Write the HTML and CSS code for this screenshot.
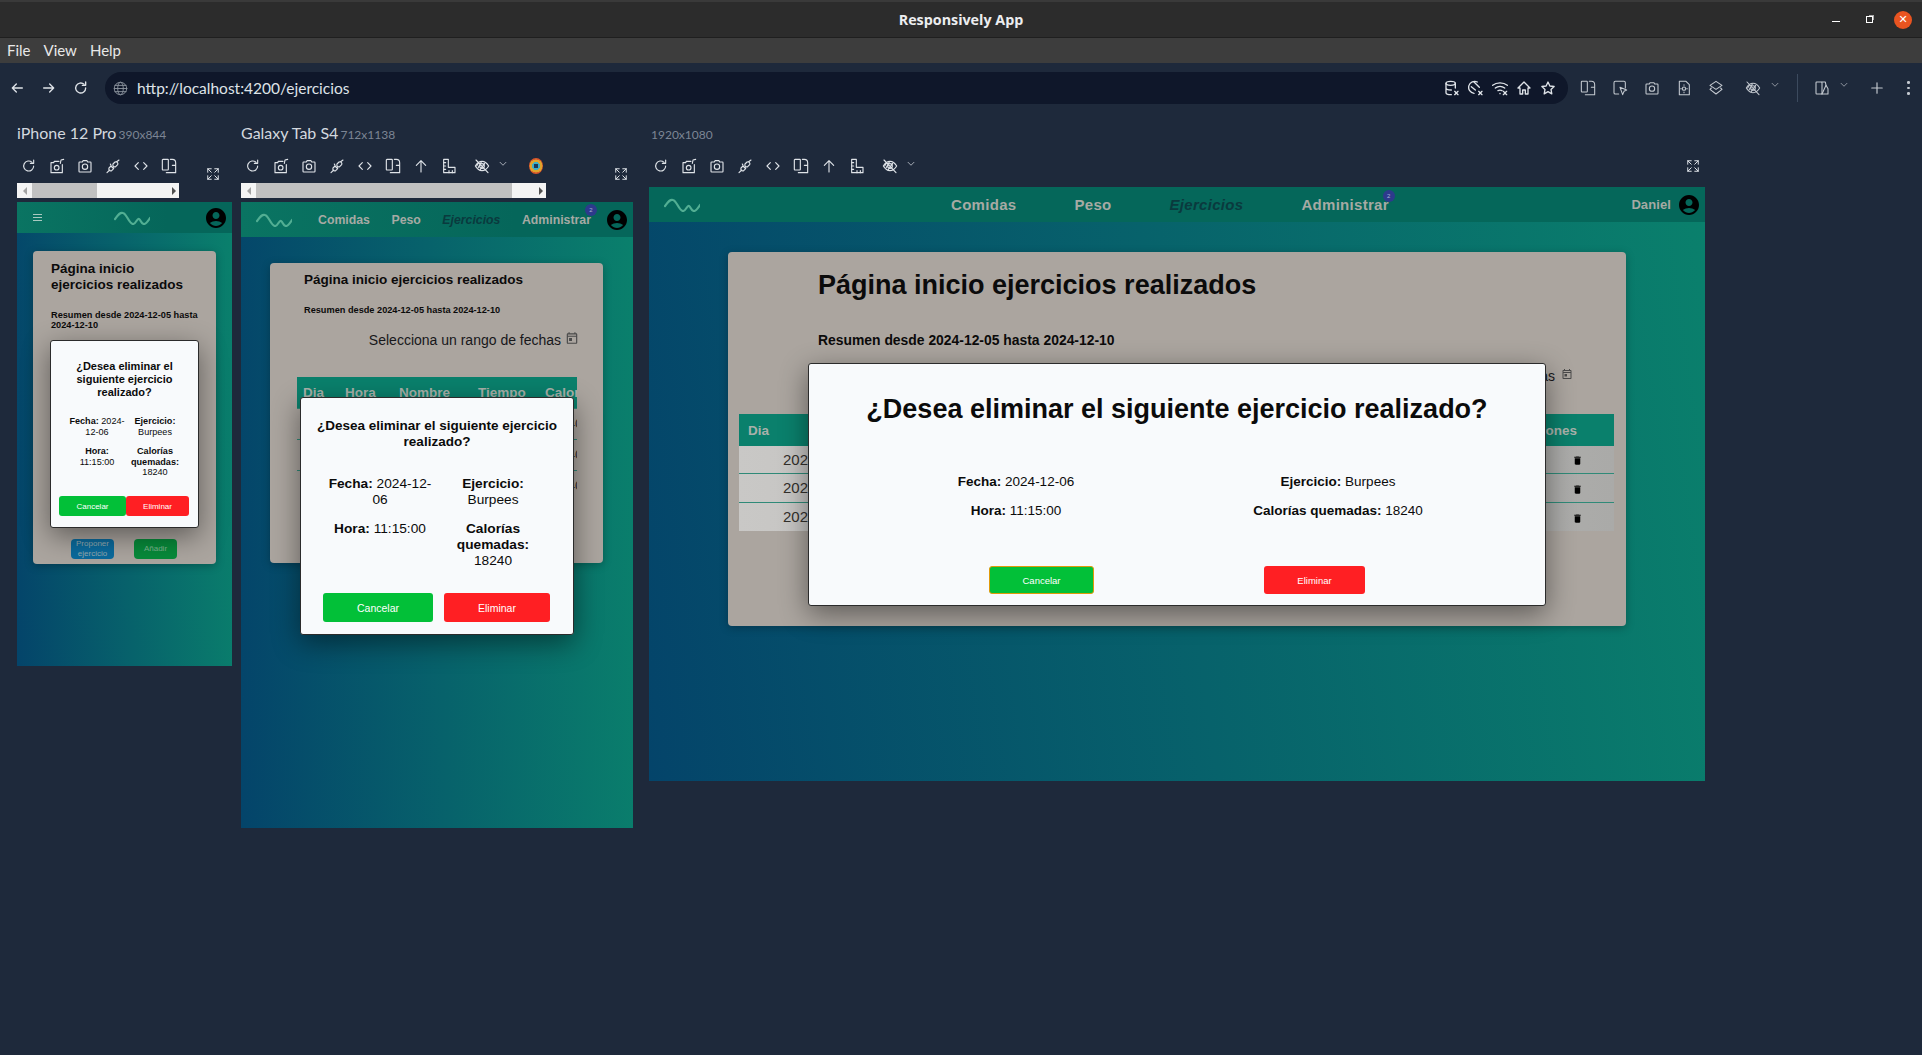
FILE: index.html
```html
<!DOCTYPE html>
<html lang="es">
<head>
  <meta charset="UTF-8" />
  <title>Responsively App</title>
  <link rel="stylesheet" href="styles.css">
</head>
<body>
  <svg class="sprite" xmlns="http://www.w3.org/2000/svg">
    <symbol id="i-refresh" viewBox="0 0 24 24"><path d="M19 12a7.5 7.5 0 1 1-2.4-5.5"/><path d="M19 3v5h-5"/></symbol>
    <symbol id="i-back" viewBox="0 0 24 24"><path d="M20 12H5M11 6l-6 6 6 6"/></symbol>
    <symbol id="i-forward" viewBox="0 0 24 24"><path d="M4 12h15M13 6l6 6-6 6"/></symbol>
    <symbol id="i-shot" viewBox="0 0 24 24"><path d="M15 5H8L7 7H3v15h17V10"/><circle cx="11.5" cy="14.5" r="3.5"/><path d="M17 8l1-5 4-1"/></symbol>
    <symbol id="i-camera" viewBox="0 0 24 24"><path d="M4 6h4l1-2h6l1 2h4a1 1 0 0 1 1 1v13a1 1 0 0 1-1 1H4a1 1 0 0 1-1-1V7a1 1 0 0 1 1-1z"/><circle cx="12" cy="13" r="4"/></symbol>
    <symbol id="i-plug" viewBox="0 0 24 24"><path d="M3 22l4-4M21 3l-4 3M9 12l-3 3a3 3 0 0 0 4 4l3-3zM15 6l-3 3a3 3 0 0 0 4 4l3-3a3 3 0 0 0-4-4z"/><path d="M8 9l1 2M11 14l2 1"/></symbol>
    <symbol id="i-code" viewBox="0 0 24 24"><path d="M8 7l-5 5 5 5M16 7l5 5-5 5"/></symbol>
    <symbol id="i-rotate" viewBox="0 0 24 24"><rect x="2" y="2" width="9" height="16" rx="1"/><path d="M14 2h3a5 5 0 0 1 5 5v15H8M22 11h-5"/></symbol>
    <symbol id="i-up" viewBox="0 0 24 24"><path d="M12 21V4M5 11l7-7 7 7"/></symbol>
    <symbol id="i-ruler" viewBox="0 0 24 24"><path d="M4 2h7v12h10v8H4z"/><path d="M4 7h3M4 12h3M4 17h3M12 22v-3M17 22v-3"/></symbol>
    <symbol id="i-eye" viewBox="0 0 24 24"><path d="M2 12c3-5 6-7 10-7s7 2 10 7c-3 5-6 7-10 7s-7-2-10-7z"/><circle cx="12" cy="12" r="3.5"/><path d="M3 3l18 19M7 7l-3 5M11 6l-5 9M16 8l-7 10"/></symbol>
    <symbol id="i-chevron" viewBox="0 0 24 24"><path d="M5 8l7 7 7-7"/></symbol>
    <symbol id="i-expand" viewBox="0 0 24 24"><path d="M3 9V3h6M3 3l6 6M15 3h6v6M21 3l-6 6M3 15v6h6M3 21l6-6M21 15v6h-6M21 21l-6-6"/></symbol>
    <symbol id="i-globe" viewBox="0 0 24 24"><circle cx="12" cy="12" r="10"/><ellipse cx="12" cy="12" rx="4.5" ry="10"/><path d="M2 12h20M3 7h18M3 17h18"/></symbol>
    <symbol id="i-db" viewBox="0 0 24 24"><ellipse cx="10" cy="5" rx="7" ry="3"/><path d="M3 5v14c0 2 3 3 8 3M17 5v7M3 12c0 2 4 3 8 3"/><path d="M16 17l5 5M21 17l-5 5"/></symbol>
    <symbol id="i-clockx" viewBox="0 0 24 24"><path d="M14 3a9 9 0 1 0-5 17"/><path d="M9 3l8 8M5 10l6 5M16 17l5 5M21 17l-5 5"/></symbol>
    <symbol id="i-wifi" viewBox="0 0 24 24"><path d="M1 8c6-5 16-5 22 0M5 12c4-3 10-3 14 0M9 16c2-1 4-1 6 0M12 20v.5"/><path d="M17 17l5 5M22 17l-5 5"/></symbol>
    <symbol id="i-home" viewBox="0 0 24 24"><path d="M12 3L3 12h3v9h4v-6h4v6h4v-9h3z"/></symbol>
    <symbol id="i-star" viewBox="0 0 24 24"><path d="M12 3l2.8 6 6.4.8-4.7 4.4 1.2 6.5L12 17.5l-5.7 3.2 1.2-6.5L2.800 9.800 9.200 9z"/></symbol>
    <symbol id="i-cursor" viewBox="0 0 24 24"><path d="M10 21H5a2 2 0 0 1-2-2V4a2 2 0 0 1 2-2h13a2 2 0 0 1 2 2v8"/><path d="M12 11l10 4-4 2-2 5z"/></symbol>
    <symbol id="i-doc" viewBox="0 0 24 24"><path d="M5 2h10l5 5v15H5z"/><circle cx="12" cy="13" r="2.500"/><path d="M12 7v1M12 18v1M7 13h1M16 13h1"/></symbol>
    <symbol id="i-layers" viewBox="0 0 24 24"><path d="M12 2l9 6-9 6-9-6z"/><path d="M5 12l-2 2 9 7 9-7-2-2"/></symbol>
    <symbol id="i-theme" viewBox="0 0 24 24"><rect x="3" y="3" width="9" height="18" rx="1"/><path d="M12 3h5l1 5-6 13"/><path d="M18 8l3 5v8h-9"/></symbol>
    <symbol id="i-plus" viewBox="0 0 24 24"><path d="M12 3v18M3 12h18"/></symbol>
    <symbol id="i-account" viewBox="0 0 24 24"><path class="solid" d="M12 2C6.480 2 2 6.480 2 12s4.480 10 10 10 10-4.480 10-10S17.520 2 12 2zm0 4c1.930 0 3.500 1.570 3.500 3.500S13.930 13 12 13s-3.500-1.570-3.500-3.500S10.070 6 12 6zm0 14c-2.030 0-4.430-.820-6.140-2.880C7.550 15.800 9.680 15 12 15s4.450.800 6.140 2.120C16.430 19.180 14.030 20 12 20z"/></symbol>
    <symbol id="i-calendar" viewBox="0 0 24 24"><path class="solid" d="M19 4h-1V2h-2v2H8V2H6v2H5c-1.110 0-1.990.900-1.990 2L3 20a2 2 0 0 0 2 2h14c1.100 0 2-.900 2-2V6c0-1.100-.900-2-2-2zm0 16H5V10h14v10zm0-12H5V6h14v2zM7 12h5v5H7z"/></symbol>
    <symbol id="i-trash" viewBox="0 0 24 24"><path class="solid" d="M6 19c0 1.100.900 2 2 2h8c1.100 0 2-.900 2-2V7H6v12zM19 4h-3.500l-1-1h-5l-1 1H5v2h14V4z"/></symbol>
    <symbol id="i-logo" viewBox="0 0 36 14"><path d="M1 8C4 4 6 1 9 2c4 1 6 11 10 11 3 0 4-6 6-5 2 1 2 5 5 5 2 0 4-3 6-6"/></symbol>
  </svg>

  <header class="titlebar">
    <span></span>
    <span class="app-name">Responsively App</span>
    <div class="win-controls">
      <span class="win-min"></span>
      <span class="win-max"></span>
      <span class="win-close">✕</span>
    </div>
  </header>

  <nav class="menubar">
    <span>File</span><span>View</span><span>Help</span>
  </nav>

  <div class="toolbar">
    <div class="tb-nav">
      <svg class="ic"><use href="#i-back"/></svg>
      <svg class="ic"><use href="#i-forward"/></svg>
      <svg class="ic"><use href="#i-refresh"/></svg>
    </div>
    <div class="addressbar">
      <svg class="ic ic-globe"><use href="#i-globe"/></svg>
      <span class="url">http://localhost:4200/ejercicios</span>
      <div class="addr-icons">
        <svg class="ic"><use href="#i-db"/></svg>
        <svg class="ic"><use href="#i-clockx"/></svg>
        <svg class="ic"><use href="#i-wifi"/></svg>
        <svg class="ic"><use href="#i-home"/></svg>
        <svg class="ic"><use href="#i-star"/></svg>
      </div>
    </div>
    <div class="tb-right">
      <svg class="ic"><use href="#i-rotate"/></svg>
      <svg class="ic"><use href="#i-cursor"/></svg>
      <svg class="ic"><use href="#i-camera"/></svg>
      <svg class="ic"><use href="#i-doc"/></svg>
      <svg class="ic"><use href="#i-layers"/></svg>
      <svg class="ic ic-eye"><use href="#i-eye"/></svg>
      <svg class="ic ic-chev"><use href="#i-chevron"/></svg>
      <span class="tb-sep"></span>
      <svg class="ic ic-theme"><use href="#i-theme"/></svg>
      <svg class="ic ic-chev"><use href="#i-chevron"/></svg>
      <svg class="ic ic-plus"><use href="#i-plus"/></svg>
      <span class="dots"><i></i><i></i><i></i></span>
    </div>
  </div>

  <main class="devices">

    <section class="device phone">
      <h3 class="dev-label">iPhone 12 Pro <small>390x844</small></h3>
      <div class="dev-tools">
        <svg class="ic"><use href="#i-refresh"/></svg>
        <svg class="ic"><use href="#i-shot"/></svg>
        <svg class="ic"><use href="#i-camera"/></svg>
        <svg class="ic"><use href="#i-plug"/></svg>
        <svg class="ic"><use href="#i-code"/></svg>
        <svg class="ic"><use href="#i-rotate"/></svg>
        <svg class="ic ic-expand"><use href="#i-expand"/></svg>
      </div>
      <div class="hscroll"><i class="arrow-l"></i><b class="thumb"></b><i class="arrow-r"></i></div>
      <div class="viewport">
        <div class="appnav">
          <span class="burger"><i></i><i></i><i></i></span>
          <svg class="logo"><use href="#i-logo"/></svg>
          <svg class="avatar"><use href="#i-account"/></svg>
        </div>
        <div class="card">
          <h2 class="page-title">Página inicio ejercicios realizados</h2>
          <h4 class="summary">Resumen desde 2024-12-05 hasta 2024-12-10</h4>
          <div class="card-actions">
            <span class="btn-propose">Proponer ejercicio</span>
            <span class="btn-add">Añadir</span>
          </div>
        </div>
        <div class="modal">
          <h2 class="modal-title">¿Desea eliminar el siguiente ejercicio realizado?</h2>
          <div class="modal-fields">
            <p><strong>Fecha:</strong> 2024-12-06</p>
            <p><strong>Ejercicio:</strong> Burpees</p>
            <p><strong>Hora:</strong> 11:15:00</p>
            <p><strong>Calorías quemadas:</strong> 18240</p>
          </div>
          <div class="modal-buttons">
            <button class="btn-cancel">Cancelar</button>
            <button class="btn-delete">Eliminar</button>
          </div>
        </div>
      </div>
    </section>

    <section class="device tablet">
      <h3 class="dev-label">Galaxy Tab S4 <small>712x1138</small></h3>
      <div class="dev-tools">
        <svg class="ic"><use href="#i-refresh"/></svg>
        <svg class="ic"><use href="#i-shot"/></svg>
        <svg class="ic"><use href="#i-camera"/></svg>
        <svg class="ic"><use href="#i-plug"/></svg>
        <svg class="ic"><use href="#i-code"/></svg>
        <svg class="ic"><use href="#i-rotate"/></svg>
        <svg class="ic"><use href="#i-up"/></svg>
        <svg class="ic"><use href="#i-ruler"/></svg>
        <svg class="ic ic-eye"><use href="#i-eye"/></svg>
        <svg class="ic ic-chev"><use href="#i-chevron"/></svg>
        <span class="ic-chrome"></span>
        <svg class="ic ic-expand"><use href="#i-expand"/></svg>
      </div>
      <div class="hscroll"><i class="arrow-l"></i><b class="thumb"></b><i class="arrow-r"></i></div>
      <div class="viewport">
        <div class="appnav">
          <svg class="logo"><use href="#i-logo"/></svg>
          <div class="nav-links">
            <a>Comidas</a><a>Peso</a><a class="active">Ejercicios</a>
            <a class="has-badge">Administrar<span class="badge">2</span></a>
          </div>
          <svg class="avatar"><use href="#i-account"/></svg>
        </div>
        <div class="card">
          <h2 class="page-title">Página inicio ejercicios realizados</h2>
          <h4 class="summary">Resumen desde 2024-12-05 hasta 2024-12-10</h4>
          <div class="date-range">Selecciona un rango de fechas <svg class="calendar"><use href="#i-calendar"/></svg></div>
          <div class="table-wrap">
            <table class="tabla">
              <thead><tr><th>Dia</th><th>Hora</th><th>Nombre</th><th>Tiempo</th><th>Calorías</th><th>Acciones</th></tr></thead>
              <tbody>
                <tr><td>2024-12-05</td><td>10:00:00</td><td>Burpees</td><td>30</td><td>18240</td><td></td></tr>
                <tr><td>2024-12-06</td><td>11:15:00</td><td>Burpees</td><td>30</td><td>18240</td><td></td></tr>
                <tr><td>2024-12-08</td><td>09:30:00</td><td>Burpees</td><td>30</td><td>18240</td><td></td></tr>
              </tbody>
            </table>
          </div>
        </div>
        <div class="modal">
          <h2 class="modal-title">¿Desea eliminar el siguiente ejercicio realizado?</h2>
          <div class="modal-fields">
            <p><strong>Fecha:</strong> 2024-12-06</p>
            <p><strong>Ejercicio:</strong> Burpees</p>
            <p><strong>Hora:</strong> 11:15:00</p>
            <p><strong>Calorías quemadas:</strong> 18240</p>
          </div>
          <div class="modal-buttons">
            <button class="btn-cancel">Cancelar</button>
            <button class="btn-delete">Eliminar</button>
          </div>
        </div>
      </div>
    </section>

    <section class="device desktop">
      <h3 class="dev-label"><small>1920x1080</small></h3>
      <div class="dev-tools">
        <svg class="ic"><use href="#i-refresh"/></svg>
        <svg class="ic"><use href="#i-shot"/></svg>
        <svg class="ic"><use href="#i-camera"/></svg>
        <svg class="ic"><use href="#i-plug"/></svg>
        <svg class="ic"><use href="#i-code"/></svg>
        <svg class="ic"><use href="#i-rotate"/></svg>
        <svg class="ic"><use href="#i-up"/></svg>
        <svg class="ic"><use href="#i-ruler"/></svg>
        <svg class="ic ic-eye"><use href="#i-eye"/></svg>
        <svg class="ic ic-chev"><use href="#i-chevron"/></svg>
        <svg class="ic ic-expand"><use href="#i-expand"/></svg>
      </div>
      <div class="viewport">
        <div class="appnav">
          <svg class="logo"><use href="#i-logo"/></svg>
          <div class="nav-links">
            <a>Comidas</a><a>Peso</a><a class="active">Ejercicios</a>
            <a class="has-badge">Administrar<span class="badge">2</span></a>
          </div>
          <span class="username">Daniel</span>
          <svg class="avatar"><use href="#i-account"/></svg>
        </div>
        <div class="card">
          <h2 class="page-title">Página inicio ejercicios realizados</h2>
          <h4 class="summary">Resumen desde 2024-12-05 hasta 2024-12-10</h4>
          <div class="date-range">Selecciona un rango de fechas <svg class="calendar"><use href="#i-calendar"/></svg></div>
          <div class="table-wrap">
            <table class="tabla">
              <thead><tr><th>Dia</th><th>Hora</th><th>Nombre</th><th>Tiempo</th><th>Calorías</th><th>Acciones</th></tr></thead>
              <tbody>
                <tr><td>2024-12-05</td><td>10:00:00</td><td>Burpees</td><td>30</td><td>18240</td><td><svg class="trash"><use href="#i-trash"/></svg></td></tr>
                <tr><td>2024-12-06</td><td>11:15:00</td><td>Burpees</td><td>30</td><td>18240</td><td><svg class="trash"><use href="#i-trash"/></svg></td></tr>
                <tr><td>2024-12-08</td><td>09:30:00</td><td>Burpees</td><td>30</td><td>18240</td><td><svg class="trash"><use href="#i-trash"/></svg></td></tr>
              </tbody>
            </table>
          </div>
        </div>
        <div class="modal">
          <h2 class="modal-title">¿Desea eliminar el siguiente ejercicio realizado?</h2>
          <div class="modal-fields">
            <p><strong>Fecha:</strong> 2024-12-06</p>
            <p><strong>Ejercicio:</strong> Burpees</p>
            <p><strong>Hora:</strong> 11:15:00</p>
            <p><strong>Calorías quemadas:</strong> 18240</p>
          </div>
          <div class="modal-buttons">
            <button class="btn-cancel">Cancelar</button>
            <button class="btn-delete">Eliminar</button>
          </div>
        </div>
      </div>
    </section>

  </main>
</body>
</html>
```

FILE: styles.css
```css
* { box-sizing: border-box; }

html, body {
  margin: 0;
  height: 1055px;
  overflow: hidden;
}

body {
  background: #1e293b;
  color: #e2e8f0;
  font-family: 'Lato', 'Liberation Sans', sans-serif;
}

.sprite { display: none; }

/* icons share one stroke look, the filled ones opt out */
.ic {
  width: 16px;
  height: 16px;
  flex: none;
  fill: none;
  stroke: #dfe3e8;
  stroke-width: 2;
  stroke-linecap: round;
  stroke-linejoin: round;
}

.solid { fill: currentColor; stroke: none; }

/* window chrome */
.titlebar {
  height: 38px;
  display: grid;
  grid-template-columns: 1fr auto 1fr;
  align-items: center;
  background: #2c2c2c;
  border-top: 2px solid #3a3a3a;
  border-bottom: 1px solid #1f1f1f;
}

.app-name {
  font-family: 'Open Sans', sans-serif;
  font-size: 14.300px;
  font-weight: 700;
  color: #eceef0;
}

.win-controls {
  display: flex;
  justify-content: flex-end;
  align-items: center;
  gap: 21px;
  padding-right: 10px;
}

.win-min {
  width: 8px;
  height: 1px;
  margin: 4px 5px 0 0;
  background: #fff;
}

.win-max {
  width: 7px;
  height: 7px;
  border: 1px solid #fff;
  box-shadow: 2px -2px 0 -1px #aaa;
}

.win-close {
  width: 18px;
  height: 18px;
  border-radius: 50%;
  background: #e95420;
  color: #fff;
  font: 11px/18px 'DejaVu Sans', sans-serif;
  text-align: center;
}

.menubar {
  height: 25px;
  display: flex;
  align-items: center;
  gap: 13px;
  padding: 0 0 2px 7px;
  background: #3d3d3d;
  font-size: 15px;
  color: #e8e8e8;
}

.toolbar {
  height: 32px;
  margin-top: 9px;
  display: flex;
  align-items: center;
}

.tb-nav {
  width: 105px;
  padding-left: 9px;
  display: flex;
  gap: 16px;
}

.addressbar {
  width: 1463px;
  height: 32px;
  display: flex;
  align-items: center;
  padding: 0 12px 0 8px;
  border-radius: 16px;
  background: #0f172a;
}

.ic-globe {
  width: 15px;
  height: 15px;
  stroke: #8a919c;
  stroke-width: 1.500;
}

.url {
  margin-left: 9px;
  font-size: 15.500px;
  color: #dfe3e8;
}

.addr-icons {
  margin-left: auto;
  display: flex;
  gap: 8px;
}

.tb-right {
  display: flex;
  align-items: center;
  gap: 16px;
  padding-left: 12px;
}

.tb-right .ic { stroke-width: 1.600; stroke: #c4c9d0; }
.tb-right .ic-eye { margin-left: 5px; }
.tb-right .ic-chev { width: 10px; height: 10px; margin-left: -7px; margin-top: -6px; }

.tb-sep {
  width: 1px;
  height: 28px;
  background: #3c4a5e;
  margin-left: 1px;
}

.tb-right .ic-plus { margin-left: 5px; width: 14px; height: 14px; stroke-width: 2; }

.dots {
  display: flex;
  flex-direction: column;
  gap: 3px;
  margin-left: 7px;
}

.dots i {
  width: 2.500px;
  height: 2.500px;
  border-radius: 50%;
  background: #c4c9d0;
}

/* device panels */
.devices {
  display: flex;
  align-items: flex-start;
  padding: 19px 0 0 17px;
}

.dev-label {
  height: 20px;
  margin: 0 0 13px;
  font-size: 16px;
  line-height: 20px;
  font-weight: 400;
  color: #d3d8df;
  white-space: nowrap;
}

.dev-label small {
  font-size: 12px;
  color: #7c8594;
  margin-left: -2px;
}

.dev-tools {
  height: 20px;
  display: flex;
  align-items: center;
  gap: 12px;
  padding-left: 4px;
}

.dev-tools .ic { width: 16px; height: 16px; stroke-width: 1.700; }
.dev-tools .ic-eye { margin-left: 5px; }
.dev-tools .ic-chev { width: 10px; height: 10px; margin-left: -4px; margin-top: -5px; }
.dev-tools .ic-expand { margin-left: auto; margin-top: 16px; width: 14px; height: 14px; }

.ic-chrome {
  width: 14px;
  height: 16px;
  margin-left: 9px;
  border-radius: 50%;
  background: radial-gradient(circle, #1c3a56 0 22%, #3fb0c4 23% 38%, #e0a52c 40% 60%, #d9562a 62% 100%);
}

.hscroll {
  height: 15px;
  margin-top: 7px;
  display: flex;
  align-items: center;
  background: #f4f4f4;
}

.hscroll .thumb {
  height: 15px;
  background: #c1c1c1;
}

.arrow-l, .arrow-r {
  width: 0;
  height: 0;
  border: 4px solid transparent;
}

.arrow-l { border-right-color: #a3a3a3; margin-left: 2px; margin-right: 5px; }
.arrow-r { border-left-color: #505050; margin-left: auto; margin-right: -1px; }

.viewport {
  position: relative;
  margin-top: 4px;
  background: linear-gradient(88deg, #04446a 0%, #0a806c 100%);
  color: #0b0b0b;
  font-family: 'Liberation Sans', Arial, sans-serif;
}

.appnav {
  display: flex;
  align-items: center;
  background: linear-gradient(90deg, #0a7462, #05665a 70%);
}

.logo {
  width: 36px;
  height: 14px;
  flex: none;
  fill: none;
  stroke: #52ae93;
  stroke-width: 2.200;
  stroke-linecap: round;
}

.avatar {
  width: 24px;
  height: 24px;
  flex: none;
  color: #000;
}

.nav-links {
  display: flex;
  align-items: center;
  font-weight: 700;
  color: #a6aaa4;
}

.nav-links .active {
  color: #0a3a3e;
  font-style: italic;
}

.has-badge { position: relative; }

.badge {
  position: absolute;
  top: -9px;
  right: -6px;
  width: 12px;
  height: 12px;
  border-radius: 50%;
  background: #2d3a8c;
  color: #a9b4d8;
  font-size: 6px;
  font-weight: 400;
  line-height: 12px;
  text-align: center;
}

.card {
  display: flex;
  flex-direction: column;
  background: #aba59f;
  border-radius: 4px;
  box-shadow: 0 2px 8px rgba(0, 0, 0, .25);
}

.page-title, .summary, .modal-title, .modal-fields p { margin: 0; }

.date-range {
  font-family: 'Liberation Sans', Arial, sans-serif;
  text-align: right;
  color: #17171a;
}

.calendar { color: #4a4a4a; vertical-align: top; }

.table-wrap { overflow: hidden; }

.tabla {
  border-collapse: collapse;
  table-layout: fixed;
}

.tabla th {
  text-align: left;
  font-weight: 700;
  color: #a9b1aa;
  background: #0a806c;
  white-space: nowrap;
}

.tabla td {
  white-space: nowrap;
  border-top: 1px solid #2f8a78;
}

.modal {
  position: absolute;
  display: flex;
  flex-direction: column;
  background: #f8fafc;
  border: 1px solid #2b2b2b;
  border-radius: 3px;
  box-shadow: 0 8px 28px rgba(0, 0, 0, .45);
}

.modal-title {
  text-align: center;
  font-weight: 700;
}

.modal-fields {
  display: grid;
  text-align: center;
}

.modal-buttons {
  display: flex;
}

.modal-buttons button {
  border: none;
  border-radius: 3px;
  color: #fff;
  font-family: 'Liberation Sans', Arial, sans-serif;
}

.btn-cancel { background: #02c038; }
.btn-delete { background: #ff1f23; }

/* iPhone 12 Pro */
.phone { width: 215px; margin-right: 9px; }

.phone .hscroll { width: 162px; }
.phone .thumb { width: 65px; }
.phone .dev-tools .ic-expand { margin-right: 12px; }

.phone .viewport { height: 464px; }
.phone .appnav { height: 31px; padding: 0 4px 0 16px; }

.burger { display: flex; flex-direction: column; gap: 2px; width: 9px; }
.burger i { height: 1px; background: #a9c9c0; }

.phone .logo { margin-left: 72px; }
.phone .avatar { margin-left: auto; }

.phone .card { height: 313px; margin: 18px 16px 0; padding: 10px 0 5px 18px; }
.phone .page-title { font-size: 13.500px; line-height: 16px; padding-right: 25px; }
.phone .summary { font-size: 9.200px; line-height: 10px; margin-top: 17px; }

.card-actions {
  margin-top: auto;
  display: flex;
  gap: 20px;
  padding-left: 20px;
  height: 20px;
}

.card-actions span {
  width: 43px;
  border-radius: 4px;
  font-size: 8px;
  line-height: 10px;
  text-align: center;
  color: #95aab0;
}

.btn-propose { background: #0b6a9c; }
.btn-add { background: #078a3a; line-height: 20px !important; color: #7cb48e !important; }

.phone .modal { left: 33px; top: 138px; width: 149px; height: 188px; padding-top: 19px; }
.phone .modal-title { font-size: 11px; line-height: 13px; padding: 0 16px; }
.phone .modal-fields {
  grid-template-columns: 58px 58px;
  row-gap: 9px;
  padding-left: 17px;
  margin-top: 17px;
  font-size: 9.100px;
  line-height: 10.500px;
}
.phone .modal-buttons { margin: auto 0 11px 8px; }
.phone .btn-cancel { width: 67px; height: 20px; font-size: 8px; }
.phone .btn-delete { width: 63px; height: 20px; font-size: 8px; }

/* Galaxy Tab S4 */
.tablet { width: 392px; margin-right: 16px; }

.tablet .hscroll { width: 305px; }
.tablet .thumb { width: 256px; }
.tablet .dev-tools .ic-expand { margin-right: 5px; }

.tablet .viewport { height: 626px; }
.tablet .appnav { height: 35px; padding: 0 4px 0 15px; }
.tablet .nav-links { margin-left: 26px; gap: 21.500px; font-size: 12.300px; }
.tablet .avatar { margin-left: auto; }

.tablet .card { height: 300px; margin: 26px 30px 0 29px; padding-top: 9px; }
.tablet .page-title { font-size: 13.500px; line-height: 16px; padding-left: 34px; }
.tablet .summary { font-size: 9.200px; line-height: 10px; margin-top: 17px; padding-left: 34px; }
.tablet .date-range { font-size: 14px; line-height: 16px; margin-top: 17px; padding-right: 24px; }
.tablet .calendar { width: 14px; height: 14px; margin-left: 0; margin-top: -1px; }
.tablet .table-wrap { margin: 29px 26px 0 27px; }
.tablet .tabla { width: 372px; font-size: 13.500px; }
.tablet .tabla th, .tablet .tabla td { padding-left: 6px; }
.tablet .tabla th { height: 31px; }
.tablet .tabla td { height: 31px; color: #33302c; }
.tablet .tabla th:nth-child(1) { width: 42px; }
.tablet .tabla th:nth-child(2) { width: 54px; }
.tablet .tabla th:nth-child(3) { width: 79px; }
.tablet .tabla th:nth-child(4) { width: 67px; }

.tablet .modal { left: 59px; top: 195px; width: 274px; height: 238px; padding-top: 20px; }
.tablet .modal-title { font-size: 13.500px; line-height: 16px; padding: 0 10px; }
.tablet .modal-fields {
  grid-template-columns: 110px 90px;
  column-gap: 13px;
  row-gap: 13px;
  padding-left: 24px;
  margin-top: 26px;
  font-size: 13.700px;
  line-height: 16px;
}
.tablet .modal-buttons { margin: auto 0 12px 22px; gap: 11px; }
.tablet .btn-cancel { width: 110px; height: 29px; font-size: 10.500px; }
.tablet .btn-delete { width: 106px; height: 29px; font-size: 10.500px; }

/* desktop 1920x1080 */
.desktop { width: 1056px; }

.desktop .dev-label { padding-left: 2px; }
.desktop .dev-label small { margin-left: 0; }
.desktop .dev-tools { margin-bottom: 11px; }
.desktop .dev-tools .ic-expand { margin: 0 5px 0 auto; }

.desktop .viewport { height: 594px; margin-top: 0; background: linear-gradient(82deg, #04446a 0%, #0a806c 100%); }
.desktop .appnav { height: 35px; padding: 0 4px 0 15px; background: #05675a; }
.desktop .nav-links { margin-left: 251px; gap: 58px; font-size: 15px; letter-spacing: .3px; }
.desktop .badge { top: -6px; right: -6px; }
.desktop .username { margin-left: auto; font-size: 13px; font-weight: 700; color: #a6aaa4; letter-spacing: .1px; margin-right: 6px; }

.desktop .card { height: 374px; margin: 30px 79px 0; padding-top: 18px; }
.desktop .page-title { font-size: 27px; line-height: 30px; padding-left: 90px; }
.desktop .summary { font-size: 13.900px; line-height: 16px; margin-top: 32px; padding-left: 90px; }
.desktop .date-range { font-size: 14px; line-height: 18px; margin-top: 19px; padding-right: 53px; }
.desktop .calendar { width: 12px; height: 14px; margin-left: 2px; margin-top: 0; }
.desktop .table-wrap { margin: 29px 12px 0 11px; }
.desktop .tabla { width: 875px; font-size: 15px; background: linear-gradient(90deg, #c9c8c6, #aaaaa8); }
.desktop .tabla th { height: 32px; padding-left: 9px; font-size: 13.500px; }
.desktop .tabla th:last-child { text-align: right; padding-right: 37px; width: 110px; }
.desktop .tabla td { height: 29px; padding-left: 44px; color: #33302c; }
.desktop .tabla tbody tr:first-child td { height: 27px; border-top: none; }
.desktop .tabla td:last-child { text-align: right; padding-right: 31px; }
.desktop .trash { width: 11px; height: 11px; color: #000; vertical-align: middle; }

.desktop .modal { left: 159px; top: 176px; width: 738px; height: 243px; padding-top: 29px; }
.desktop .modal-title { font-size: 27px; line-height: 32px; }
.desktop .modal-fields {
  grid-template-columns: 322px 322px;
  row-gap: 13px;
  padding-left: 46px;
  margin-top: 49px;
  font-size: 13.500px;
  line-height: 16px;
}
.desktop .modal-buttons { margin: auto 0 11px 180px; gap: 170px; }
.desktop .btn-cancel { width: 105px; height: 28px; font-size: 9.500px; border: 1px solid #e09a0a; }
.desktop .btn-delete { width: 101px; height: 28px; font-size: 9.500px; }
```
